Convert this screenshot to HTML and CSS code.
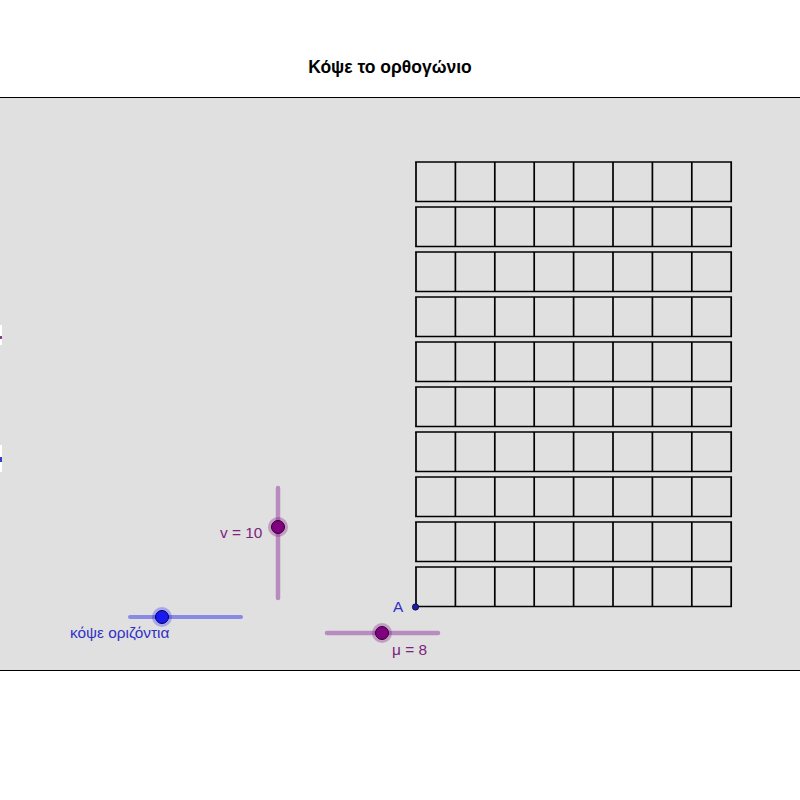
FILE: index.html
```html
<!DOCTYPE html>
<html lang="el">
<head>
<meta charset="utf-8">
<title>Κόψε το ορθογώνιο</title>
<link rel="stylesheet" href="styles.css">
</head>
<body>
<header class="title-bar">
  <h1 class="title">Κόψε το ορθογώνιο</h1>
</header>
<main class="panel">
  <svg class="canvas" width="800" height="572" viewBox="0 98 800 572" xmlns="http://www.w3.org/2000/svg">
    <!-- clipped objects at the left edge -->
    <rect x="0" y="325" width="2" height="20" fill="#ffffff"/>
    <rect x="0" y="336" width="2" height="3" fill="#8a3a8a"/>
    <rect x="0" y="445" width="2" height="27" fill="#ffffff"/>
    <rect x="0" y="457" width="2" height="5" fill="#3a3ac8"/>

    <!-- grid of squares -->
    <g class="grid" fill="none" stroke="#000" stroke-width="1.7" stroke-linecap="square">
      <path d="M416 162H731.2 M416 201.5H731.2
               M416 207H731.2 M416 246.5H731.2
               M416 252H731.2 M416 291.5H731.2
               M416 297H731.2 M416 336.5H731.2
               M416 342H731.2 M416 381.5H731.2
               M416 387H731.2 M416 426.5H731.2
               M416 432H731.2 M416 471.5H731.2
               M416 477H731.2 M416 516.5H731.2
               M416 522H731.2 M416 561.5H731.2
               M416 567H731.2 M416 606.5H731.2"/>
      <path stroke-dasharray="39.5 5.5" stroke-linecap="butt"
            d="M416 162V607 M455.4 162V607 M494.8 162V607 M534.2 162V607 M573.6 162V607
               M613 162V607 M652.4 162V607 M691.8 162V607 M731.2 162V607"/>
    </g>

    <!-- point A -->
    <circle cx="415.5" cy="607" r="3.2" fill="#1c1ca8" stroke="#000" stroke-width="0.6"/>
    <text class="lbl lbl-blue" x="393" y="612">A</text>

    <!-- slider v (vertical) -->
    <line x1="278" y1="488" x2="278" y2="598" stroke="#b98cbf" stroke-width="4.5" stroke-linecap="round"/>
    <circle cx="278" cy="527" r="10" fill="#800080" fill-opacity="0.3"/>
    <circle cx="278" cy="527" r="6.5" fill="#800080" stroke="#2a002a" stroke-width="1"/>
    <text class="lbl lbl-purple" x="220" y="538">v = 10</text>

    <!-- slider κόψε οριζόντια -->
    <line x1="130" y1="617" x2="241" y2="617" stroke="#8a8ae6" stroke-width="4" stroke-linecap="round"/>
    <circle cx="162" cy="617" r="10" fill="#0000ff" fill-opacity="0.25"/>
    <circle cx="162" cy="617" r="6.5" fill="#1a1af0" stroke="#00005a" stroke-width="1"/>
    <text class="lbl lbl-blue" x="70" y="638">κόψε οριζόντια</text>

    <!-- slider μ -->
    <line x1="327" y1="633" x2="438" y2="633" stroke="#b98cbf" stroke-width="4.5" stroke-linecap="round"/>
    <circle cx="382" cy="633" r="10" fill="#800080" fill-opacity="0.3"/>
    <circle cx="382" cy="633" r="6.5" fill="#800080" stroke="#2a002a" stroke-width="1"/>
    <text class="lbl lbl-purple" x="392" y="655">μ = 8</text>
  </svg>
</main>
</body>
</html>
```

FILE: styles.css
```css
html, body {
  margin: 0;
  padding: 0;
  background: #ffffff;
}

body {
  font-family: "Liberation Sans", Arial, sans-serif;
  width: 800px;
  height: 800px;
  overflow: hidden;
}

.title-bar {
  height: 97px;
  display: flex;
  justify-content: center;
  align-items: flex-start;
}

.title {
  margin: 56px 0 0 -20px;
  font-size: 17.5px;
  font-weight: bold;
  line-height: 22px;
  color: #000;
}

.panel {
  border-top: 1px solid #000;
  border-bottom: 1px solid #000;
  background: #e0e0e0;
  height: 572px;
}

.canvas {
  display: block;
}

.lbl {
  font-family: "Liberation Sans", Arial, sans-serif;
  font-size: 15.4px;
}

.lbl-blue {
  fill: #3131c4;
}

.lbl-purple {
  fill: #7d237d;
}
```
